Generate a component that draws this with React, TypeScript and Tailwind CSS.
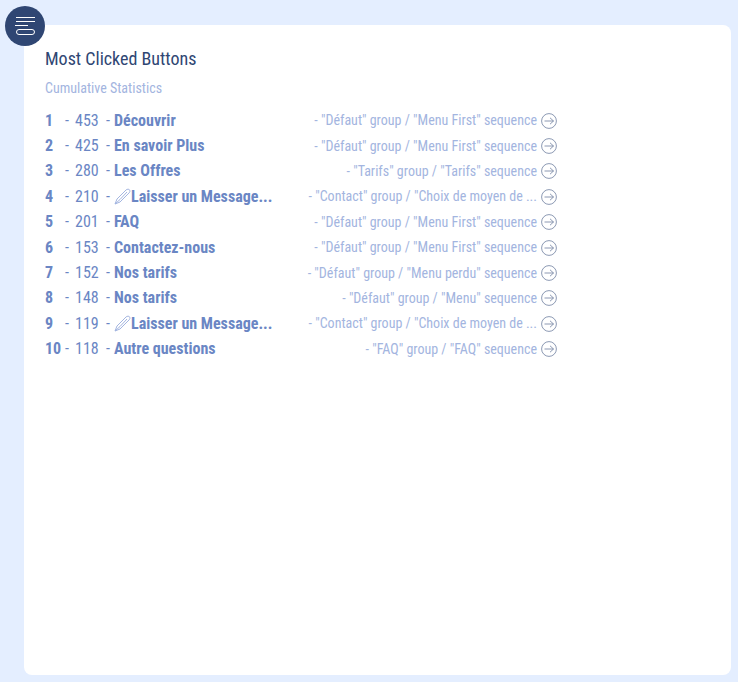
const rows = [
  { rank: 1, count: 453, name: 'Découvrir', from: '- "Défaut" group / "Menu First" sequence' },
  { rank: 2, count: 425, name: 'En savoir Plus', from: '- "Défaut" group / "Menu First" sequence' },
  { rank: 3, count: 280, name: 'Les Offres', from: '- "Tarifs" group / "Tarifs" sequence' },
  { rank: 4, count: 210, name: 'Laisser un Message...', pen: true, from: '- "Contact" group / "Choix de moyen de ...' },
  { rank: 5, count: 201, name: 'FAQ', from: '- "Défaut" group / "Menu First" sequence' },
  { rank: 6, count: 153, name: 'Contactez-nous', from: '- "Défaut" group / "Menu First" sequence' },
  { rank: 7, count: 152, name: 'Nos tarifs', from: '- "Défaut" group / "Menu perdu" sequence' },
  { rank: 8, count: 148, name: 'Nos tarifs', from: '- "Défaut" group / "Menu" sequence' },
  { rank: 9, count: 119, name: 'Laisser un Message...', pen: true, from: '- "Contact" group / "Choix de moyen de ...' },
  { rank: 10, count: 118, name: 'Autre questions', from: '- "FAQ" group / "FAQ" sequence' },
];

function Pen() {
  return (
    <svg width="17" height="17" viewBox="0 0 17 17" fill="none" stroke="#a3b5e0" strokeWidth="1" className="shrink-0">
      <path d="M1 16 L3 11 L12 2 C13 1 15 1 15.5 1.8 C16.2 3 16 4 15 5 L6 14 Z" />
      <path d="M1 16 L6 11.5 L13 4" />
    </svg>
  );
}

function ArrowCircle() {
  return (
    <svg width="16" height="16" viewBox="0 0 16 16" fill="none" stroke="#6f7f9f" strokeWidth="0.8" className="shrink-0">
      <circle cx="8" cy="8" r="7.4" />
      <path d="M3.5 8 H12.5 M9 4.8 L12.5 8 L9 11.2" />
    </svg>
  );
}

export default function App() {
  return (
    <div className="relative h-[682px] w-[738px] overflow-hidden bg-[#e4eeff] pt-[25px] pr-[7px] pb-[7px] pl-[24px] font-['Roboto',sans-serif] [font-stretch:75%]">
      <div className="absolute top-[6px] left-[5px] flex h-10 w-10 flex-col items-center justify-center rounded-full bg-[#2f4673]">
        <div className="h-px w-[19px] bg-white" />
        <div className="mt-[3px] h-px w-[19px] bg-white" />
        <div className="mt-[3px] h-px w-[13px] self-start ml-[10px] bg-white" />
        <div className="mt-[3px] h-[6px] w-[19px] rounded-full border border-white" />
      </div>

      <div className="h-[650px] rounded-lg bg-white pt-[22px] pl-[21px]">
        <h1 className="text-[18px] leading-[24px] text-[#2f4673]">Most Clicked Buttons</h1>
        <p className="mt-[7px] text-[14px] leading-[20px] text-[#a3b5e0]">Cumulative Statistics</p>
        <ul className="mt-[10px] w-[512px]">
          {rows.map((row) => (
            <li key={row.rank} className="flex h-[25.4px] items-center whitespace-nowrap">
              <span className="w-[20px] text-[16px] font-bold text-[#6a86c4]">{row.rank}</span>
              <span className="w-[10px] text-[16px] text-[#6a86c4]">-</span>
              <span className="w-[31px] text-[16px] text-[#6a86c4]">{row.count}</span>
              <span className="w-[8px] text-[16px] text-[#6a86c4]">-</span>
              <span className="flex w-[170px] items-center text-[16px] font-bold text-[#6a86c4]">
                {row.pen && <Pen />}
                {row.name}
              </span>
              <span className="flex-1 text-right text-[14px] text-[#a3b5e0]">{row.from}</span>
              <span className="ml-[4px] flex"><ArrowCircle /></span>
            </li>
          ))}
        </ul>
      </div>
    </div>
  );
}
